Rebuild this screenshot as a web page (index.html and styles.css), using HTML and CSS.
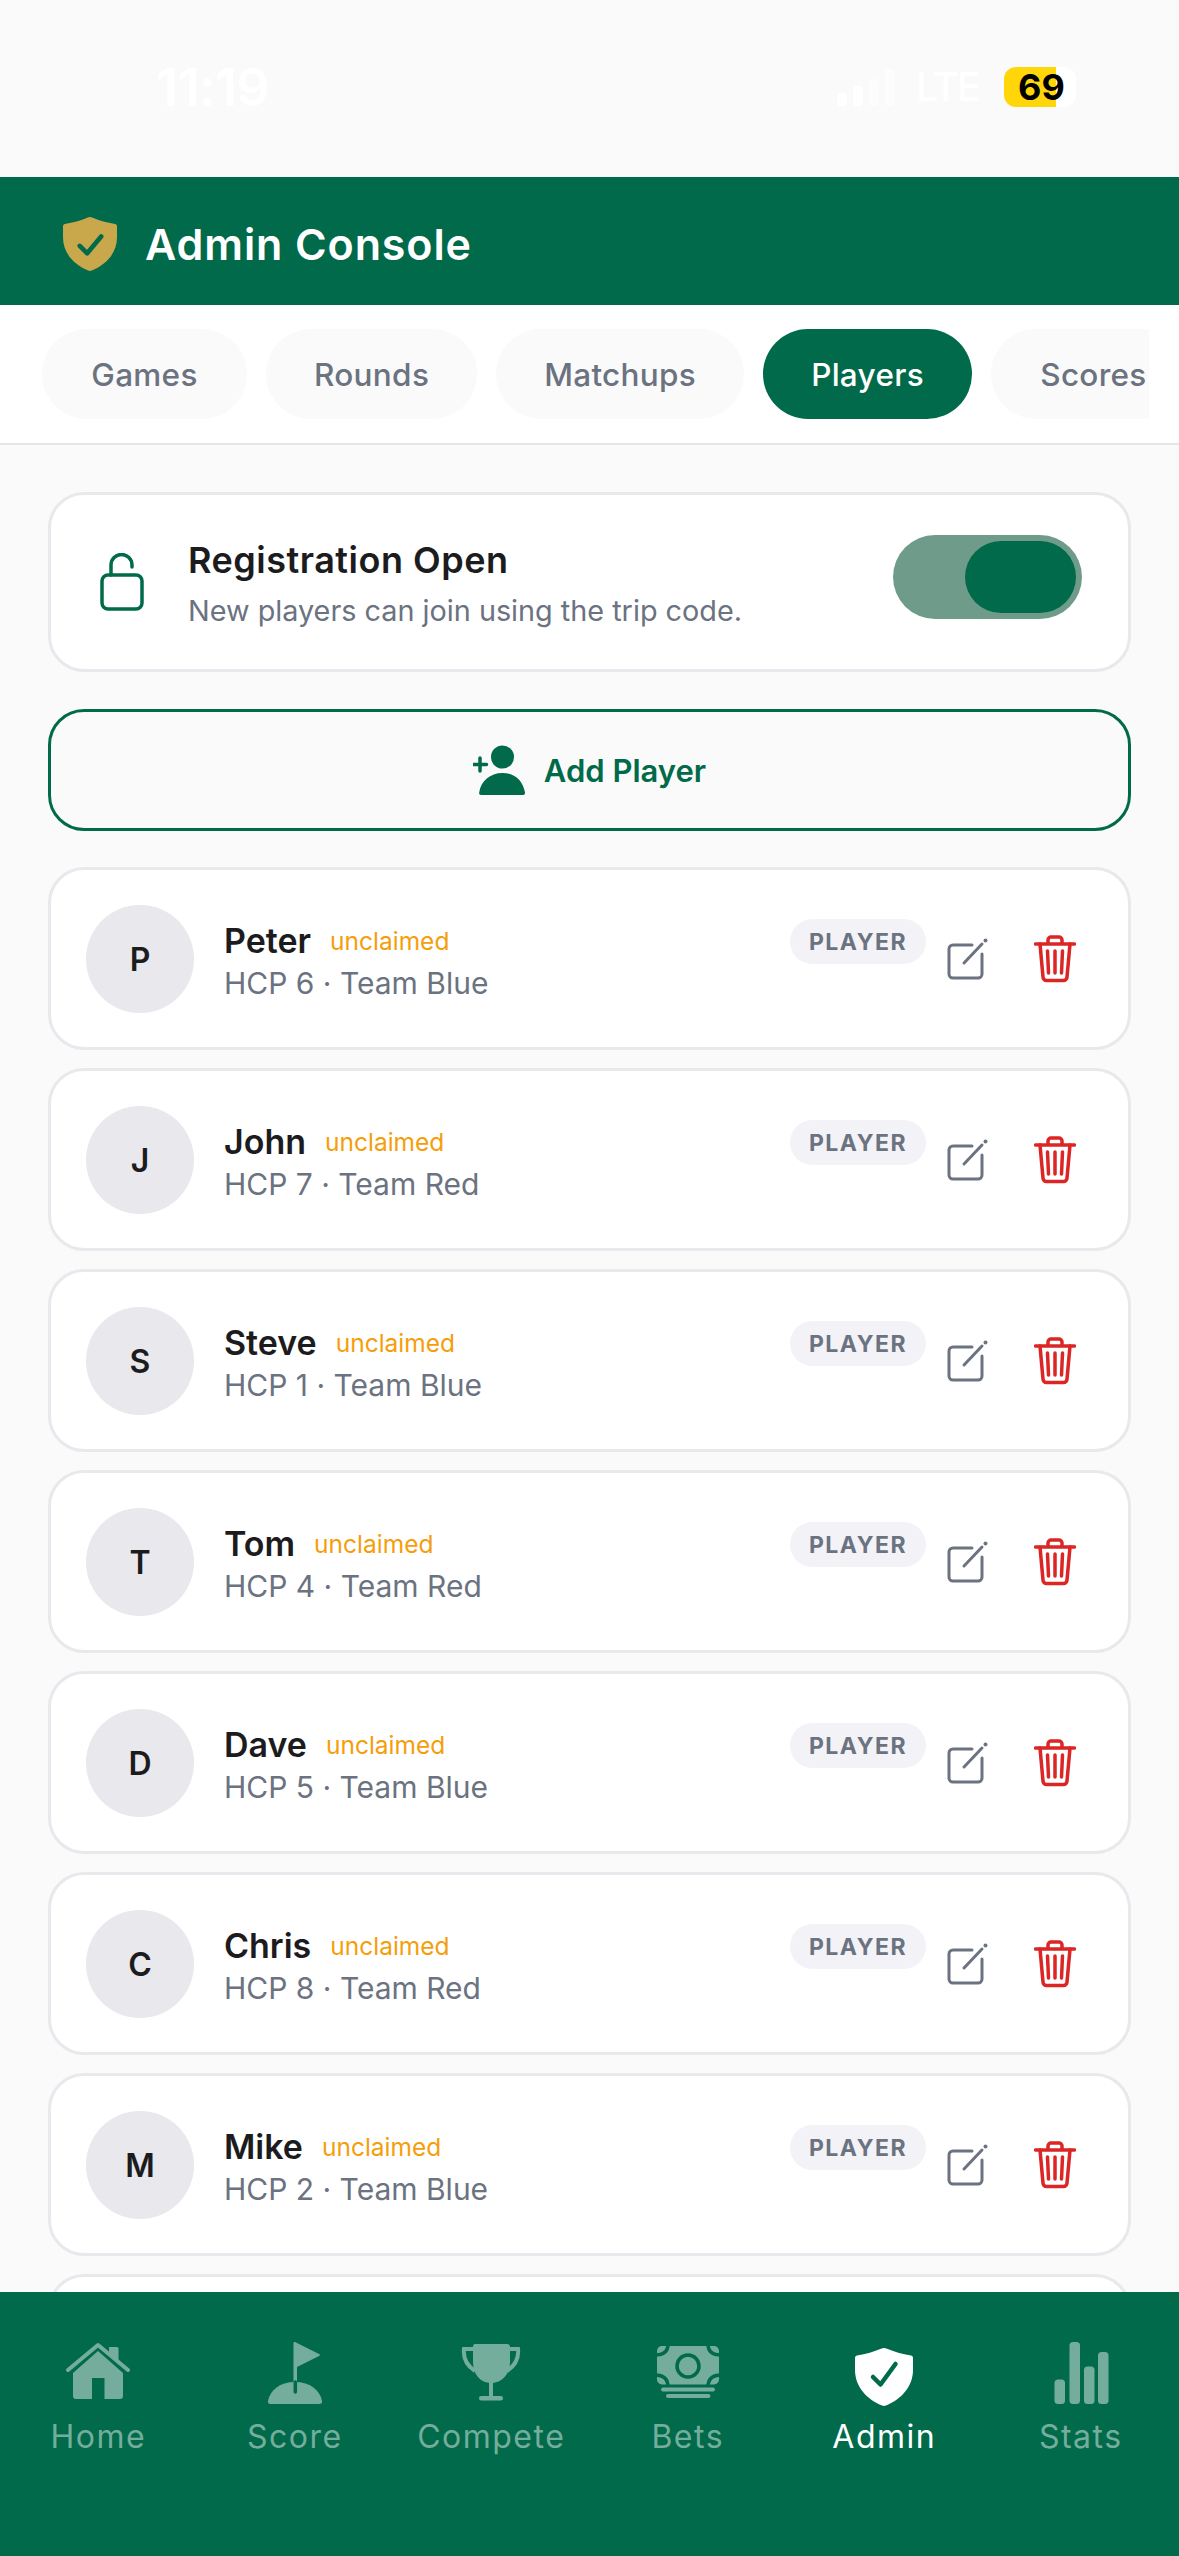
FILE: index.html
```html
<!DOCTYPE html>
<html lang="en">
<head>
<meta charset="utf-8">
<title>Admin Console</title>
<link rel="stylesheet" href="styles.css">
</head>
<body>
<svg class="defs" width="0" height="0" aria-hidden="true">
  <defs>
    <symbol id="edit" viewBox="0 0 42 42">
      <path d="M25 7H6a4 4 0 0 0-4 4v25a4 4 0 0 0 4 4h25a4 4 0 0 0 4-4V16" fill="none" stroke="#6b7280" stroke-width="3" stroke-linecap="round"/>
      <path d="M17 25 35 6" fill="none" stroke="#6b7280" stroke-width="3" stroke-linecap="round"/>
      <circle cx="38.5" cy="2.5" r="2" fill="#6b7280"/>
    </symbol>
    <symbol id="trash" viewBox="0 0 42 48">
      <g fill="none" stroke="#dc2626" stroke-width="3.500" stroke-linecap="round" stroke-linejoin="round">
        <path d="M1.5 9h39"/>
        <path d="M14 8V5a3 3 0 0 1 3-3h8a3 3 0 0 1 3 3v3"/>
        <path d="M6 9l3 33a3.500 3.500 0 0 0 3.500 3.500h17A3.500 3.500 0 0 0 33 42l3-33"/>
        <path d="M13.500 16l1 22M21 16v22M28.500 16l-1 22"/>
      </g>
    </symbol>
    <symbol id="shield" viewBox="0 0 58 58">
      <path d="M29 0c1 0 2 .4 3 .8 7 3 15 5.200 24 6.700 1 .2 2 1 2 2.500v12C58 38 47 51 31 57.500c-1.300.6-2.700.6-4 0C11 51 0 38 0 22V10c0-1.500 1-2.300 2-2.500C11 6 19 3.800 26 .8 27 .4 28 0 29 0z"/>
    </symbol>
  </defs>
</svg>

<div class="status">
  <span class="time">11:19</span>
  <span class="status-right">
    <svg class="signal" width="58" height="37" viewBox="0 0 58 37"><rect x="0" y="24" width="10" height="13" rx="3"/><rect x="16" y="17" width="10" height="20" rx="3"/><rect class="signal-off" x="32" y="10" width="10" height="27" rx="3"/><rect class="signal-off" x="48" y="0" width="10" height="37" rx="3"/></svg>
    <span class="lte">LTE</span>
    <span class="battery"><span class="battery-fill"></span><span class="battery-num">69</span></span>
  </span>
</div>

<header class="header">
  <svg class="header-icon" width="54" height="54" viewBox="0 0 58 58"><use href="#shield" fill="#c9a84c"/><path d="M18 31l8 8 15-18" fill="none" stroke="#006a4a" stroke-width="5" stroke-linecap="round" stroke-linejoin="round"/></svg>
  <h1 class="title">Admin Console</h1>
</header>

<nav class="tabs">
  <div class="tabs-scroll">
    <span class="tab">Games</span>
    <span class="tab">Rounds</span>
    <span class="tab">Matchups</span>
    <span class="tab tab-active">Players</span>
    <span class="tab">Scores</span>
  </div>
</nav>

<main class="main">
  <section class="card reg">
    <svg class="lock" width="44" height="58" viewBox="0 0 44 58" fill="none" stroke="#006a4a" stroke-width="3.500"><rect x="2" y="22" width="40" height="34" rx="6"/><path d="M11 22V12a10.500 10.500 0 0 1 21 0v2" stroke-linecap="round"/></svg>
    <div class="reg-text">
      <div class="reg-title">Registration Open</div>
      <div class="reg-sub">New players can join using the trip code.</div>
    </div>
    <div class="toggle"><span class="knob"></span></div>
  </section>

  <button class="add">
    <svg width="52" height="50" viewBox="0 0 52 50" fill="#006a4a"><circle cx="29.500" cy="12" r="11.500"/><path d="M8 50a2 2 0 0 1-1.800-2.500C8 36 17 28 29.500 28S50 36 52 47.500A2 2 0 0 1 50 50z"/><path d="M7 13v13M0.500 19.500h13" stroke="#006a4a" stroke-width="3.500" stroke-linecap="round"/></svg>
    <span>Add Player</span>
  </button>

  <article class="card player">
    <div class="avatar">P</div>
    <div class="info"><div class="name-row"><span class="name">Peter</span><span class="unclaimed">unclaimed</span></div><div class="meta">HCP 6 · Team Blue</div></div>
    <span class="role">PLAYER</span>
    <svg class="edit-icon"><use href="#edit"/></svg>
    <svg class="trash-icon"><use href="#trash"/></svg>
  </article>
  <article class="card player">
    <div class="avatar">J</div>
    <div class="info"><div class="name-row"><span class="name">John</span><span class="unclaimed">unclaimed</span></div><div class="meta">HCP 7 · Team Red</div></div>
    <span class="role">PLAYER</span>
    <svg class="edit-icon"><use href="#edit"/></svg>
    <svg class="trash-icon"><use href="#trash"/></svg>
  </article>
  <article class="card player">
    <div class="avatar">S</div>
    <div class="info"><div class="name-row"><span class="name">Steve</span><span class="unclaimed">unclaimed</span></div><div class="meta">HCP 1 · Team Blue</div></div>
    <span class="role">PLAYER</span>
    <svg class="edit-icon"><use href="#edit"/></svg>
    <svg class="trash-icon"><use href="#trash"/></svg>
  </article>
  <article class="card player">
    <div class="avatar">T</div>
    <div class="info"><div class="name-row"><span class="name">Tom</span><span class="unclaimed">unclaimed</span></div><div class="meta">HCP 4 · Team Red</div></div>
    <span class="role">PLAYER</span>
    <svg class="edit-icon"><use href="#edit"/></svg>
    <svg class="trash-icon"><use href="#trash"/></svg>
  </article>
  <article class="card player">
    <div class="avatar">D</div>
    <div class="info"><div class="name-row"><span class="name">Dave</span><span class="unclaimed">unclaimed</span></div><div class="meta">HCP 5 · Team Blue</div></div>
    <span class="role">PLAYER</span>
    <svg class="edit-icon"><use href="#edit"/></svg>
    <svg class="trash-icon"><use href="#trash"/></svg>
  </article>
  <article class="card player">
    <div class="avatar">C</div>
    <div class="info"><div class="name-row"><span class="name">Chris</span><span class="unclaimed">unclaimed</span></div><div class="meta">HCP 8 · Team Red</div></div>
    <span class="role">PLAYER</span>
    <svg class="edit-icon"><use href="#edit"/></svg>
    <svg class="trash-icon"><use href="#trash"/></svg>
  </article>
  <article class="card player">
    <div class="avatar">M</div>
    <div class="info"><div class="name-row"><span class="name">Mike</span><span class="unclaimed">unclaimed</span></div><div class="meta">HCP 2 · Team Blue</div></div>
    <span class="role">PLAYER</span>
    <svg class="edit-icon"><use href="#edit"/></svg>
    <svg class="trash-icon"><use href="#trash"/></svg>
  </article>
  <article class="card player"></article>
</main>

<nav class="bottom">
  <div class="nav-item">
    <svg class="nav-icon" width="64" height="66" viewBox="0 0 64 66"><path class="lite-line" d="M2 30 32 5l30 25" stroke-width="4" stroke-linecap="round" stroke-linejoin="round"/><path class="lite" d="M43 7h8a1.500 1.500 0 0 1 1.500 1.500V23L43 14.500z"/><path class="lite" d="M32 11 57 33v23q0 3-3 3H38.500V38H26v21H10q-3 0-3-3V33z"/></svg>
    <span>Home</span>
  </div>
  <div class="nav-item">
    <svg class="nav-icon" width="58" height="66" viewBox="0 0 58 66"><path class="lite" d="M27.500 3q0-1.500 1.500-1L53 14q2 1 0 2L31 27v16h-3.500z"/><path class="lite" d="M4.500 64H53q3.500 0 3-3C54 50 44 42 29 42 14 42 4 50 2 61q-.5 3 2.500 3z"/><path class="dark-line" d="M29.300 42v10" stroke-width="3.500" stroke-linecap="round"/></svg>
    <span>Score</span>
  </div>
  <div class="nav-item">
    <svg class="nav-icon" width="62" height="66" viewBox="0 0 62 66"><path class="lite" d="M15 4h32q3 0 3 3v15c0 12-8 21-19 21S13 34 13 22V7q0-3 2-3z"/><rect class="lite" x="29" y="42" width="4" height="16"/><rect class="lite" x="19" y="56" width="24" height="4.500" rx="2.200"/><path class="lite-line" d="M13 9H4C3 18 6 25 15 31M49 9h9c1 9-2 16-11 22" stroke-width="4"/></svg>
    <span>Compete</span>
  </div>
  <div class="nav-item">
    <svg class="nav-icon" width="66" height="66" viewBox="0 0 66 66">
      <rect class="lite" x="2" y="6" width="62" height="38.500" rx="5"/>
      <circle cx="33" cy="26" r="11" fill="#74ad9b" stroke="#006a4a" stroke-width="3.500"/>
      <g class="dark-line" stroke-width="3.500"><path d="M13 4c0 7-4 11-13 11M53 4c0 7 4 11 13 11M13 47c0-8-4-12-13-12M53 47c0-8 4-12 13-12"/></g>
      <rect class="lite" x="6" y="47.500" width="54" height="4" rx="2"/>
      <rect class="lite" x="11" y="54" width="44.500" height="4" rx="2"/>
    </svg>
    <span>Bets</span>
  </div>
  <div class="nav-item nav-active">
    <svg class="nav-icon" width="58" height="66" viewBox="0 0 58 66"><g transform="translate(0 4)"><use href="#shield" fill="#fff"/><path d="M18 33l7.500 7.500L40.500 20" fill="none" stroke="#006a4a" stroke-width="4.500" stroke-linecap="round" stroke-linejoin="round"/></g></svg>
    <span>Admin</span>
  </div>
  <div class="nav-item">
    <svg class="nav-icon" width="56" height="66" viewBox="0 0 56 66"><rect class="lite" x="1.500" y="39.500" width="10.500" height="24.500" rx="3.500"/><rect class="lite" x="16.500" y="2" width="10.500" height="62" rx="3.500"/><rect class="lite" x="31" y="26.500" width="10.500" height="37.500" rx="3.500"/><rect class="lite" x="45" y="12" width="10.500" height="52" rx="3.500"/></svg>
    <span>Stats</span>
  </div>
</nav>
</body>
</html>
```
FILE: styles.css
```css
* { box-sizing: border-box; }
html, body { margin: 0; padding: 0; }
body {
  width: 1179px;
  height: 2556px;
  overflow: hidden;
  display: flex;
  flex-direction: column;
  background: #fafafa;
  font-family: Inter, "Noto Sans", sans-serif;
  color: #1c1c1e;
}
.defs { position: absolute; }

/* status bar */
.status {
  height: 177px;
  flex: none;
  display: flex;
  justify-content: space-between;
  align-items: flex-start;
  padding: 60px 103px 0 156px;
  color: #fff;
}
.time { font-size: 52px; font-weight: 600; line-height: 56px; letter-spacing: -.5px; }
.status-right { display: flex; align-items: center; padding-top: 7px; }
.signal { fill: #fff; margin-right: 21px; }
.signal-off { opacity: .5; }
.lte { font-size: 40px; font-weight: 500; line-height: 40px; letter-spacing: -2px; margin-right: 25px; }
.battery { position: relative; width: 72px; height: 40px; background: #fff; border-radius: 12px; display: block; }
.battery-fill { position: absolute; left: 0; top: 0; bottom: 0; width: 52px; background: #ffd60a; border-radius: 12px 0 0 12px; }
.battery-num { position: absolute; left: 14px; top: 0; font-size: 36px; line-height: 40px; font-weight: 700; color: #000; }

/* header */
.header {
  height: 128px;
  flex: none;
  background: #006a4a;
  display: flex;
  align-items: center;
  gap: 28px;
  padding: 6px 0 0 63px;
}
.title { margin: 0; font-size: 43px; font-weight: 600; color: #fff; line-height: 1; letter-spacing: .9px; }

/* tabs */
.tabs {
  height: 140px;
  flex: none;
  background: #fff;
  border-bottom: 2px solid #e5e5ea;
  padding: 24px 30px 0 42px;
}
.tabs-scroll { display: flex; gap: 19px; overflow: hidden; }
.tab {
  flex: none;
  height: 90px;
  min-width: 205px;
  padding: 0 48px;
  border-radius: 45px;
  background: #fafafa;
  color: #6b7280;
  font-size: 31.500px;
  font-weight: 500;
  letter-spacing: .3px;
  display: flex;
  align-items: center;
  justify-content: center;
}
.tab-active { background: #006a4a; color: #fff; }

/* main */
.main {
  flex: 1;
  min-height: 0;
  overflow: hidden;
  padding: 47px 48px 0;
  display: flex;
  flex-direction: column;
  align-items: stretch;
}
.card {
  flex: none;
  background: #fff;
  border: 3px solid #e8e8ed;
  border-radius: 36px;
}
.reg {
  height: 180px;
  display: flex;
  align-items: center;
  padding: 0 46px 0 49px;
}
.lock { flex: none; margin-right: 44px; }
.reg-text { flex: 1; padding-top: 3px; }
.reg-title { font-size: 36px; font-weight: 600; line-height: 46px; letter-spacing: .5px; }
.reg-sub { font-size: 28.800px; line-height: 40px; margin-top: 8px; color: #6b7280; }
.toggle {
  flex: none;
  width: 189px;
  height: 84px;
  margin-top: -10px;
  border-radius: 42px;
  background: #6f9b8b;
  display: flex;
  align-items: center;
  justify-content: flex-end;
  padding-right: 6px;
}
.knob { display: block; width: 111px; height: 72px; border-radius: 36px; background: #006a4a; }

.add {
  flex: none;
  height: 122px;
  margin: 37px 0 36px;
  background: transparent;
  border: 3px solid #006a4a;
  border-radius: 36px;
  color: #006a4a;
  font: 600 31px Inter, "Noto Sans", sans-serif;
  display: flex;
  align-items: center;
  justify-content: center;
  gap: 19px;
}

/* player rows */
.player {
  height: 183px;
  margin-bottom: 18px;
  display: flex;
  align-items: center;
  padding: 0 52px 0 35px;
}
.avatar {
  flex: none;
  width: 108px;
  height: 108px;
  border-radius: 50%;
  background: #e8e8ed;
  display: flex;
  align-items: center;
  justify-content: center;
  font-size: 32px;
  font-weight: 600;
  padding-top: 2px;
}
.info { flex: 1; margin-left: 30px; margin-top: 5px; }
.name-row { display: flex; align-items: center; gap: 19px; }
.name { font-size: 34px; font-weight: 600; line-height: 44px; }
.unclaimed { font-size: 24.500px; color: #f59e0b; }
.meta { font-size: 30px; line-height: 40px; color: #6b7280; }
.role {
  flex: none;
  align-self: flex-start;
  margin-top: 49px;
  width: 136px;
  height: 45px;
  border-radius: 23px;
  background: #f2f2f7;
  color: #6b7280;
  font-size: 23px;
  font-weight: 700;
  letter-spacing: 1.500px;
  display: flex;
  align-items: center;
  justify-content: center;
}
.edit-icon { flex: none; width: 42px; height: 42px; margin-left: 21px; }
.trash-icon { flex: none; width: 42px; height: 48px; margin-left: 45px; }

/* bottom nav */
.bottom {
  flex: none;
  height: 264px;
  background: #006a4a;
  display: flex;
  padding-top: 48px;
  position: relative;
}
.nav-item {
  flex: 1;
  display: flex;
  flex-direction: column;
  align-items: center;
  color: #74ad9b;
  font-size: 32px;
  letter-spacing: 1.500px;
  line-height: 40px;
}
.nav-icon { display: block; margin-bottom: 11px; }
.nav-active { color: #fff; }
.lite { fill: #74ad9b; }
.lite-line { fill: none; stroke: #74ad9b; }
.dark-line { fill: none; stroke: #006a4a; }
```
